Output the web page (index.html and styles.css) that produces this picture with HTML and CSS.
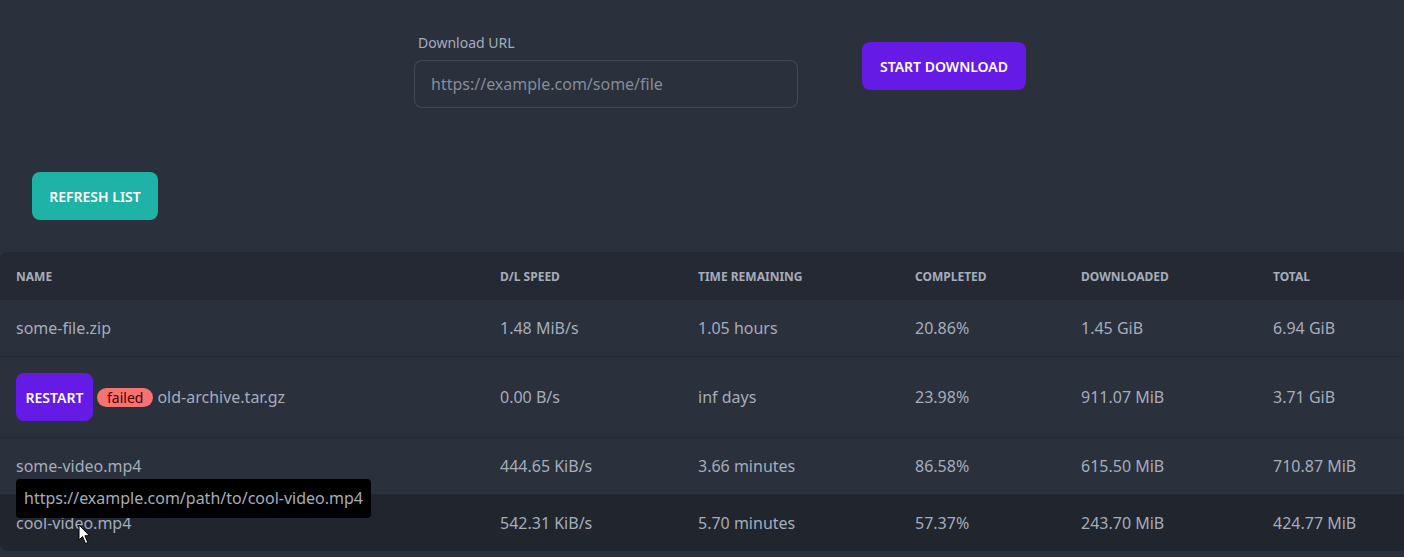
FILE: index.html
```html
<!DOCTYPE html>
<html lang="en">
<head>
<meta charset="utf-8">
<title>Downloads</title>
<link rel="stylesheet" href="styles.css">
</head>
<body>
<div class="top">
  <div class="form-control">
    <label class="label" for="url">Download URL</label>
    <input id="url" class="input" type="text" placeholder="https://example.com/some/file">
  </div>
  <button class="btn btn-primary start">Start download</button>
</div>
<div class="actions">
  <button class="btn btn-accent">Refresh list</button>
</div>
<div class="table-wrap">
  <table class="table">
    <colgroup>
      <col class="c-name"><col class="c-speed"><col class="c-time"><col class="c-comp"><col class="c-dl"><col class="c-total"><col class="c-extra">
    </colgroup>
    <thead>
      <tr><th>Name</th><th>D/L Speed</th><th>Time Remaining</th><th>Completed</th><th>Downloaded</th><th>Total</th><th></th></tr>
    </thead>
    <tbody>
      <tr><td>some-file.zip</td><td>1.48 MiB/s</td><td>1.05 hours</td><td>20.86%</td><td>1.45 GiB</td><td>6.94 GiB</td><td></td></tr>
      <tr><td><div class="name-line"><button class="btn btn-primary restart">Restart</button><span class="badge">failed</span><span class="fname">old-archive.tar.gz</span></div></td><td>0.00 B/s</td><td>inf days</td><td>23.98%</td><td>911.07 MiB</td><td>3.71 GiB</td><td></td></tr>
      <tr><td>some-video.mp4</td><td>444.65 KiB/s</td><td>3.66 minutes</td><td>86.58%</td><td>615.50 MiB</td><td>710.87 MiB</td><td></td></tr>
      <tr class="hover"><td class="tip-cell">cool-video.mp4<span class="tooltip">https://example.com/path/to/cool-video.mp4</span><svg class="cursor" width="13" height="21" viewBox="0 0 13 21"><path d="M1 1 L1 16 L4.5 12.5 L7.5 19.5 L9.8 18.5 L6.9 11.7 L11.5 11.7 Z" fill="#ffffff" stroke="#000000" stroke-width="1" stroke-linejoin="round"/></svg></td><td>542.31 KiB/s</td><td>5.70 minutes</td><td>57.37%</td><td>243.70 MiB</td><td>424.77 MiB</td><td></td></tr>
    </tbody>
  </table>
</div>
</body>
</html>
```
FILE: styles.css
```css
html, body {
  margin: 0;
  padding: 0;
}
body {
  background: #2a303c;
  color: #a6adbb;
  font-family: "Noto Sans", "Open Sans", sans-serif;
  font-size: 16px;
  line-height: 24px;
  overflow: hidden;
  height: 557px;
}
.top {
  display: flex;
  align-items: flex-start;
  padding: 24px 0 0 414px;
  gap: 64px;
}
.form-control {
  display: flex;
  flex-direction: column;
  width: 384px;
}
.label {
  padding: 9px 4px 7px 4px;
  font-size: 14px;
  line-height: 20px;
  color: #a6adbb;
}
.input {
  box-sizing: border-box;
  height: 48px;
  width: 384px;
  padding: 0 16px;
  border: 1px solid rgba(166, 173, 187, 0.2);
  border-radius: 8px;
  background: #2a303c;
  color: #a6adbb;
  font-family: inherit;
  font-size: 16px;
  outline: none;
}
.input::placeholder {
  color: rgba(166, 173, 187, 0.75);
}
.btn {
  box-sizing: border-box;
  height: 48px;
  padding: 0 16px;
  border: none;
  border-radius: 8px;
  font-family: inherit;
  font-size: 14px;
  font-weight: 600;
  text-transform: uppercase;
  cursor: pointer;
}
.btn-primary {
  background: #661ae6;
  color: #ffffff;
}
.btn-accent {
  background: #1fb2a6;
  color: #ffffff;
}
.start {
  margin-top: 18px;
  width: 164px;
}
.actions {
  padding: 64px 0 0 32px;
}
.actions .btn {
  width: 126px;
}
.table-wrap {
  margin-top: 32px;
  overflow: hidden;
}
.table {
  width: 1560px;
  border-collapse: separate;
  border-spacing: 0;
  table-layout: fixed;
  text-align: left;
}
.c-name { width: 484px; }
.c-speed { width: 198px; }
.c-time { width: 217px; }
.c-comp { width: 166px; }
.c-dl { width: 192px; }
.c-total { width: 200px; }
.table th {
  background: #242933;
  font-size: 12px;
  line-height: 16px;
  font-weight: 700;
  text-transform: uppercase;
  padding: 17px 16px 15px 16px;
  color: #a6adbb;
}
.table thead th:first-child {
  border-top-left-radius: 8px;
}
.table td {
  padding: 16px;
  border-bottom: 1px solid #242933;
  white-space: nowrap;
  vertical-align: middle;
}
.table tbody tr:last-child td {
  border-bottom: none;
}
.table tbody tr:last-child td:first-child {
  border-bottom-left-radius: 8px;
}
.table tr.hover td {
  background: #20252e;
}
.name-line {
  display: flex;
  align-items: center;
}
.restart {
  width: 77px;
  padding: 0;
}
.badge {
  display: inline-block;
  margin-left: 4px;
  height: 19px;
  line-height: 19px;
  padding: 0 10px;
  border-radius: 10px;
  background: #f87272;
  color: #470000;
  font-size: 14px;
}
.fname {
  margin-left: 4px;
}
.tip-cell {
  position: relative;
}
.tooltip {
  position: absolute;
  left: 16px;
  top: -16px;
  background: #000000;
  color: #a6adbb;
  padding: 7px 8px 8px 8px;
  border-radius: 4px;
  font-size: 16px;
  line-height: 24px;
  white-space: nowrap;
}
.cursor {
  position: absolute;
  left: 78px;
  top: 29px;
}
```
